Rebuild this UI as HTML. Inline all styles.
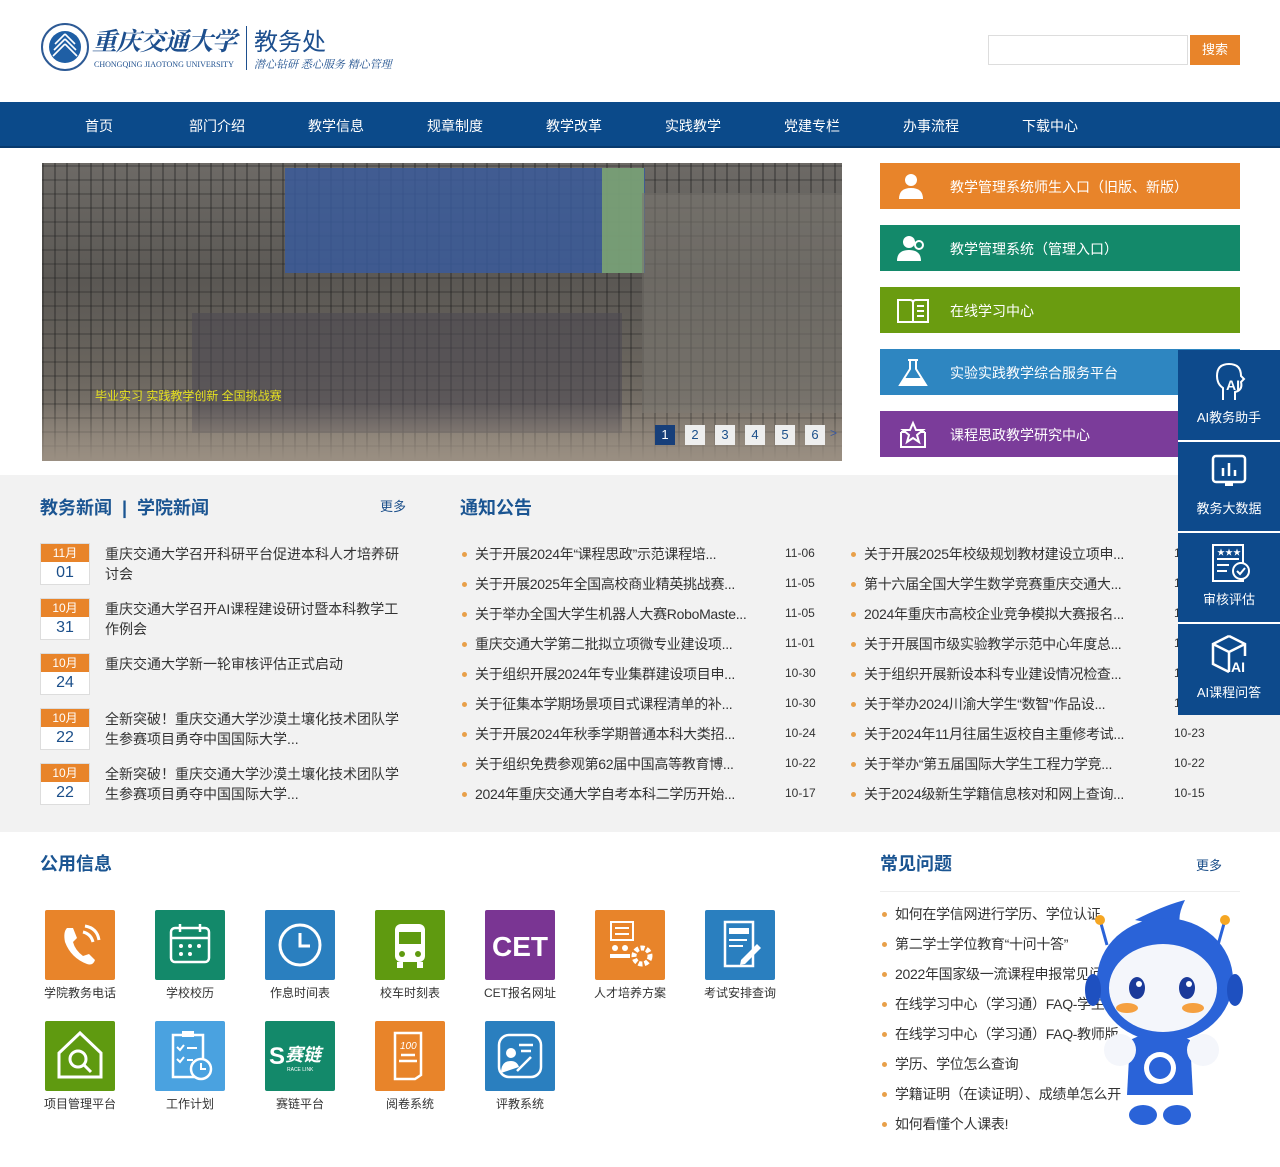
<!DOCTYPE html>
<html><head><meta charset="utf-8">
<style>
*{margin:0;padding:0;box-sizing:border-box}
body{width:1280px;height:1167px;position:relative;background:#fff;font-family:"Liberation Sans","Noto Sans CJK SC",sans-serif;color:#333;overflow:hidden}
.a{position:absolute}
.nav{top:102px;left:0;width:1280px;height:46px;background:#0b4a8a;border-bottom:2px solid #083a6e}
.nav span{position:absolute;top:14px;color:#fff;font-size:14px;transform:translateX(-50%)}
.btn{left:880px;width:360px;height:46px;color:#fff;font-size:14px}
.btn b{position:absolute;left:70px;top:14px;font-weight:normal}
.btn svg{position:absolute;left:16px;top:9px}
.gray{top:475px;left:0;width:1280px;height:357px;background:#f2f2f2}
.h{font-size:18px;font-weight:bold;color:#1b5592}
.date{left:40px;width:50px;height:42px;background:#fff;border:1px solid #ddd}
.date i{display:block;height:18px;background:#e8842a;color:#fff;font-style:normal;font-size:12px;text-align:center;line-height:18px}
.date u{display:block;text-decoration:none;text-align:center;font-size:16px;color:#1b4f8a;line-height:22px}
.nt{left:105px;width:300px;font-size:14px;line-height:20px;color:#333}
.li{font-size:14px;color:#333;white-space:nowrap;letter-spacing:-0.3px}
.li:before{content:"";position:absolute;left:-13px;top:8px;width:5px;height:5px;border-radius:50%;background:#e8a04a}
.dt{font-size:12px;color:#333}
.side{left:1178px;width:102px;height:90px;background:#0d4a8c;color:#fff;font-size:13px;text-align:center;border-bottom:2px solid #fff}
.side span{position:absolute;left:0;right:0;bottom:14px}
.side svg{position:absolute;left:33px;top:10px}
.ic{width:70px;height:70px;border-radius:2px}
.ic svg{position:absolute;left:0;top:0}
.lb{font-size:12px;color:#333;width:90px;text-align:center}
.pg{top:425px;width:20px;height:20px;background:#eee;color:#1b4f8a;font-size:13px;text-align:center;line-height:20px}
</style></head><body>
<!-- header -->
<svg class="a" style="left:40px;top:22px" width="50" height="50"><circle cx="25" cy="25" r="23" fill="#fff" stroke="#2d5a95" stroke-width="2"/><circle cx="25" cy="25" r="16" fill="#1f5fa5"/><path d="M25 12 L15 22 M25 12 L35 22 M25 17 L14 28 M25 17 L36 28 M25 22 L13 34 M25 22 L37 34" stroke="#fff" stroke-width="1.6" fill="none"/></svg>
<div class="a" style="left:92px;top:22px;font-family:'Noto Serif CJK SC',serif;font-size:25px;color:#1d4f8e;font-weight:bold;letter-spacing:-1px;font-style:italic;white-space:nowrap">重庆交通大学</div>
<div class="a" style="left:94px;top:60px;font-family:'Liberation Serif',serif;font-size:8px;color:#1d4f8e">CHONGQING JIAOTONG UNIVERSITY</div>
<div class="a" style="left:246px;top:26px;width:1px;height:44px;background:#1d4f8e"></div>
<div class="a" style="left:254px;top:22px;font-size:24px;color:#1d4f8e">教务处</div>
<div class="a" style="left:254px;top:56px;font-size:11px;color:#1d4f8e;font-style:italic;font-family:'Noto Serif CJK SC',serif">潜心钻研 悉心服务 精心管理</div>
<div class="a" style="left:988px;top:35px;width:200px;height:30px;border:1px solid #ddd"></div>
<div class="a" style="left:1190px;top:35px;width:50px;height:30px;background:#e8842a;color:#fff;font-size:13px;text-align:center;line-height:30px">搜索</div>
<div class="a nav"><span style="left:99px">首页</span><span style="left:217px">部门介绍</span><span style="left:336px">教学信息</span><span style="left:455px">规章制度</span><span style="left:574px">教学改革</span><span style="left:693px">实践教学</span><span style="left:812px">党建专栏</span><span style="left:931px">办事流程</span><span style="left:1050px">下载中心</span></div>
<!-- banner -->
<div class="a" style="left:42px;top:163px;width:800px;height:298px;background:linear-gradient(180deg,#6d6a66 0%,#5b5854 40%,#6a655e 70%,#8a8177 100%);overflow:hidden">
<div class="a" style="left:0;top:0;width:800px;height:298px;background:repeating-linear-gradient(90deg,rgba(30,30,30,.35) 0 2px,transparent 2px 12px),repeating-linear-gradient(0deg,rgba(30,30,30,.25) 0 2px,transparent 2px 14px)"></div>
<div class="a" style="left:243px;top:5px;width:360px;height:105px;background:#3a5a9a;opacity:.85"></div>
<div class="a" style="left:560px;top:5px;width:42px;height:105px;background:#8fb86a;opacity:.7"></div>
<div class="a" style="left:150px;top:150px;width:430px;height:120px;background:#4c4a52;opacity:.6"></div>
<div class="a" style="left:600px;top:30px;width:200px;height:220px;background:#7a7670;opacity:.6"></div>
<div class="a" style="left:0;top:240px;width:800px;height:58px;background:linear-gradient(180deg,transparent,#9a8f82)"></div>
<div class="a" style="left:53px;top:224px;font-size:12px;color:#e5e020">毕业实习 实践教学创新 全国挑战赛</div>
</div>
<div class="a pg" style="left:655px;background:#173f7a;color:#fff">1</div><div class="a pg" style="left:685px">2</div><div class="a pg" style="left:715px">3</div><div class="a pg" style="left:745px">4</div><div class="a pg" style="left:775px">5</div><div class="a pg" style="left:805px">6</div><div class="a" style="left:830px;top:426px;color:#3a5aa0;font-size:12px">&gt;</div>
<!-- right buttons -->
<div class="a btn" style="top:163px;background:#e8842a"><svg width="30" height="28"><circle cx="15" cy="8" r="6" fill="#fff"/><path d="M3 27 Q3 16 15 16 Q27 16 27 27Z" fill="#fff"/></svg><b>教学管理系统师生入口（旧版、新版）</b></div>
<div class="a btn" style="top:225px;background:#13896a"><svg width="34" height="28"><circle cx="13" cy="8" r="6" fill="#fff"/><path d="M1 27 Q1 16 13 16 Q25 16 25 27Z" fill="#fff"/><circle cx="23" cy="11" r="4" fill="none" stroke="#fff" stroke-width="2"/></svg><b>教学管理系统（管理入口）</b></div>
<div class="a btn" style="top:287px;background:#6a9c10"><svg width="34" height="28"><path d="M2 4 H14 Q17 4 17 7 V26 H2Z M32 4 H20 Q17 4 17 7 V26 H32Z" fill="none" stroke="#fff" stroke-width="2"/><path d="M21 10 H28 M21 15 H28 M21 20 H28" stroke="#fff" stroke-width="2"/></svg><b>在线学习中心</b></div>
<div class="a btn" style="top:349px;background:#2e86c1"><svg width="34" height="30"><path d="M12 2 H22 M14 2 V11 L4 27 H30 L20 11 V2" fill="none" stroke="#fff" stroke-width="2"/><path d="M8 20 L26 20 L29 27 H5Z" fill="#fff"/></svg><b>实验实践教学综合服务平台</b></div>
<div class="a btn" style="top:411px;background:#7b3c9a"><svg width="34" height="30"><path d="M5 12 V27 H29 V12 M5 12 H10 M24 12 H29" fill="none" stroke="#fff" stroke-width="2"/><path d="M17 3 L20 10 L27 10 L21 15 L23 22 L17 18 L11 22 L13 15 L7 10 L14 10Z" fill="none" stroke="#fff" stroke-width="2"/></svg><b>课程思政教学研究中心</b></div>
<!-- gray section -->
<div class="a gray"></div>
<div class="a h" style="left:40px;top:494px">教务新闻 &nbsp;| &nbsp;学院新闻</div>
<div class="a" style="left:380px;top:496px;font-size:13px;color:#1b4f8a">更多</div>
<div class="a date" style="top:543px"><i>11月</i><u>01</u></div><div class="a nt" style="top:544px">重庆交通大学召开科研平台促进本科人才培养研讨会</div>
<div class="a date" style="top:598px"><i>10月</i><u>31</u></div><div class="a nt" style="top:599px">重庆交通大学召开AI课程建设研讨暨本科教学工作例会</div>
<div class="a date" style="top:653px"><i>10月</i><u>24</u></div><div class="a nt" style="top:654px">重庆交通大学新一轮审核评估正式启动</div>
<div class="a date" style="top:708px"><i>10月</i><u>22</u></div><div class="a nt" style="top:709px">全新突破！重庆交通大学沙漠土壤化技术团队学生参赛项目勇夺中国国际大学...</div>
<div class="a date" style="top:763px"><i>10月</i><u>22</u></div><div class="a nt" style="top:764px">全新突破！重庆交通大学沙漠土壤化技术团队学生参赛项目勇夺中国国际大学...</div>
<div class="a h" style="left:460px;top:494px">通知公告</div>
<div class="a li" style="left:475px;top:544px">关于开展2024年“课程思政”示范课程培...</div><div class="a dt" style="left:785px;top:546px">11-06</div>
<div class="a li" style="left:475px;top:574px">关于开展2025年全国高校商业精英挑战赛...</div><div class="a dt" style="left:785px;top:576px">11-05</div>
<div class="a li" style="left:475px;top:604px">关于举办全国大学生机器人大赛RoboMaste...</div><div class="a dt" style="left:785px;top:606px">11-05</div>
<div class="a li" style="left:475px;top:634px">重庆交通大学第二批拟立项微专业建设项...</div><div class="a dt" style="left:785px;top:636px">11-01</div>
<div class="a li" style="left:475px;top:664px">关于组织开展2024年专业集群建设项目申...</div><div class="a dt" style="left:785px;top:666px">10-30</div>
<div class="a li" style="left:475px;top:694px">关于征集本学期场景项目式课程清单的补...</div><div class="a dt" style="left:785px;top:696px">10-30</div>
<div class="a li" style="left:475px;top:724px">关于开展2024年秋季学期普通本科大类招...</div><div class="a dt" style="left:785px;top:726px">10-24</div>
<div class="a li" style="left:475px;top:754px">关于组织免费参观第62届中国高等教育博...</div><div class="a dt" style="left:785px;top:756px">10-22</div>
<div class="a li" style="left:475px;top:784px">2024年重庆交通大学自考本科二学历开始...</div><div class="a dt" style="left:785px;top:786px">10-17</div>
<div class="a li" style="left:864px;top:544px">关于开展2025年校级规划教材建设立项申...</div><div class="a dt" style="left:1174px;top:546px">11-05</div>
<div class="a li" style="left:864px;top:574px">第十六届全国大学生数学竞赛重庆交通大...</div><div class="a dt" style="left:1174px;top:576px">11-04</div>
<div class="a li" style="left:864px;top:604px">2024年重庆市高校企业竞争模拟大赛报名...</div><div class="a dt" style="left:1174px;top:606px">11-01</div>
<div class="a li" style="left:864px;top:634px">关于开展国市级实验教学示范中心年度总...</div><div class="a dt" style="left:1174px;top:636px">10-31</div>
<div class="a li" style="left:864px;top:664px">关于组织开展新设本科专业建设情况检查...</div><div class="a dt" style="left:1174px;top:666px">10-28</div>
<div class="a li" style="left:864px;top:694px">关于举办2024川渝大学生“数智”作品设...</div><div class="a dt" style="left:1174px;top:696px">10-25</div>
<div class="a li" style="left:864px;top:724px">关于2024年11月往届生返校自主重修考试...</div><div class="a dt" style="left:1174px;top:726px">10-23</div>
<div class="a li" style="left:864px;top:754px">关于举办“第五届国际大学生工程力学竞...</div><div class="a dt" style="left:1174px;top:756px">10-22</div>
<div class="a li" style="left:864px;top:784px">关于2024级新生学籍信息核对和网上查询...</div><div class="a dt" style="left:1174px;top:786px">10-15</div>
<!-- side panel -->
<div class="a side" style="top:350px;height:92px"><svg width="36" height="44"><path d="M24 40 V32 Q32 30 30 22 L33 19 L30 16 Q30 4 18 4 Q6 4 6 16 Q6 24 12 28 V40" fill="none" stroke="#fff" stroke-width="2"/><text x="15" y="30" fill="#fff" font-size="14" font-weight="bold" font-family="Liberation Sans">AI</text></svg><span>AI教务助手</span></div>
<div class="a side" style="top:442px;height:91px"><svg width="36" height="40"><rect x="2" y="4" width="32" height="26" rx="3" fill="none" stroke="#fff" stroke-width="2.5"/><path d="M12 24 V16 M18 24 V11 M24 24 V18" stroke="#fff" stroke-width="2.5"/><rect x="14" y="30" width="8" height="4" fill="#fff"/></svg><span>教务大数据</span></div>
<div class="a side" style="top:533px;height:91px"><svg width="40" height="40"><rect x="2" y="2" width="30" height="36" fill="none" stroke="#fff" stroke-width="2"/><path d="M6 16 H28 M6 22 H18 M6 28 H16" stroke="#fff" stroke-width="2"/><text x="6" y="12" fill="#fff" font-size="8">★★★</text><circle cx="30" cy="28" r="8" fill="#0d4a8c" stroke="#fff" stroke-width="2"/><path d="M26 28 L29 31 L34 25" stroke="#fff" stroke-width="2" fill="none"/></svg><span>审核评估</span></div>
<div class="a side" style="top:624px;height:91px;border-bottom:none"><svg width="40" height="42"><path d="M18 2 L34 10 V22 M18 2 L2 10 V30 L18 38 M2 10 L18 18 L34 10 M18 18 V38" fill="none" stroke="#fff" stroke-width="2.5"/><text x="20" y="38" fill="#fff" font-size="14" font-weight="bold" font-family="Liberation Sans">AI</text></svg><span>AI课程问答</span></div>
<!-- public info -->
<div class="a h" style="left:40px;top:850px">公用信息</div>
<div class="a ic" style="left:45px;top:910px;background:#e8842a"><svg width="70" height="70"><path d="M22 18 Q18 22 20 32 Q26 48 42 54 Q48 56 50 50 L44 44 L38 46 Q30 40 28 32 L32 28 L28 18Z" fill="#fff"/><path d="M38 22 Q46 24 48 32 M40 16 Q52 18 54 30" stroke="#fff" stroke-width="3" fill="none"/></svg></div>
<div class="a ic" style="left:155px;top:910px;background:#13896a"><svg width="70" height="70"><rect x="16" y="18" width="38" height="34" rx="4" fill="none" stroke="#fff" stroke-width="2.5"/><path d="M16 28 H54 M25 14 V22 M45 14 V22" stroke="#fff" stroke-width="2.5"/><g fill="#fff"><circle cx="26" cy="36" r="2"/><circle cx="35" cy="36" r="2"/><circle cx="44" cy="36" r="2"/><circle cx="26" cy="44" r="2"/><circle cx="35" cy="44" r="2"/></g></svg></div>
<div class="a ic" style="left:265px;top:910px;background:#2a7fbf"><svg width="70" height="70"><circle cx="35" cy="35" r="20" fill="none" stroke="#fff" stroke-width="3"/><path d="M35 23 V36 H45" stroke="#fff" stroke-width="3" fill="none"/></svg></div>
<div class="a ic" style="left:375px;top:910px;background:#5f9a10"><svg width="70" height="70"><rect x="20" y="14" width="30" height="38" rx="6" fill="#fff"/><rect x="24" y="22" width="22" height="12" fill="#5f9a10"/><circle cx="27" cy="44" r="3" fill="#5f9a10"/><circle cx="43" cy="44" r="3" fill="#5f9a10"/><rect x="22" y="52" width="6" height="6" fill="#fff"/><rect x="42" y="52" width="6" height="6" fill="#fff"/></svg></div>
<div class="a ic" style="left:485px;top:910px;background:#7a3593"><svg width="70" height="70"><text x="35" y="46" text-anchor="middle" fill="#fff" font-size="28" font-weight="bold" font-family="Liberation Sans">CET</text></svg></div>
<div class="a ic" style="left:595px;top:910px;background:#e8842a"><svg width="70" height="70"><rect x="16" y="12" width="22" height="18" fill="none" stroke="#fff" stroke-width="2"/><path d="M20 18 H34 M20 24 H34" stroke="#fff" stroke-width="2"/><circle cx="20" cy="38" r="3" fill="#fff"/><circle cx="30" cy="38" r="3" fill="#fff"/><path d="M15 46 H35" stroke="#fff" stroke-width="4"/><circle cx="47" cy="46" r="8" fill="none" stroke="#fff" stroke-width="5" stroke-dasharray="4 2"/></svg></div>
<div class="a ic" style="left:705px;top:910px;background:#2a7fbf"><svg width="70" height="70"><rect x="20" y="12" width="28" height="44" fill="none" stroke="#fff" stroke-width="2.5"/><rect x="24" y="18" width="20" height="6" fill="#fff"/><path d="M24 30 H42 M24 36 H38" stroke="#fff" stroke-width="2"/><path d="M36 50 L52 34 L56 38 L40 54 L35 55Z" fill="#fff"/></svg></div>
<div class="a lb" style="left:35px;top:984px">学院教务电话</div><div class="a lb" style="left:145px;top:984px">学校校历</div><div class="a lb" style="left:255px;top:984px">作息时间表</div><div class="a lb" style="left:365px;top:984px">校车时刻表</div><div class="a lb" style="left:475px;top:984px">CET报名网址</div><div class="a lb" style="left:585px;top:984px">人才培养方案</div><div class="a lb" style="left:695px;top:984px">考试安排查询</div>
<div class="a ic" style="left:45px;top:1021px;background:#5f9a10"><svg width="70" height="70"><path d="M35 12 L14 32 V56 H56 V32Z" fill="none" stroke="#fff" stroke-width="3"/><circle cx="33" cy="38" r="8" fill="none" stroke="#fff" stroke-width="3"/><path d="M39 44 L46 51" stroke="#fff" stroke-width="3"/></svg></div>
<div class="a ic" style="left:155px;top:1021px;background:#4aa2e0"><svg width="70" height="70"><rect x="18" y="14" width="30" height="42" fill="none" stroke="#fff" stroke-width="2.5"/><rect x="27" y="10" width="12" height="6" fill="#fff"/><path d="M22 26 L25 29 L29 24 M32 27 H42 M22 38 L25 41 L29 36 M32 39 H38" stroke="#fff" stroke-width="2" fill="none"/><circle cx="46" cy="48" r="10" fill="#4aa2e0" stroke="#fff" stroke-width="2.5"/><path d="M46 42 V48 H51" stroke="#fff" stroke-width="2" fill="none"/></svg></div>
<div class="a ic" style="left:265px;top:1021px;background:#13896a"><svg width="70" height="70"><text x="4" y="43" fill="#fff" font-size="24" font-weight="bold" font-family="Liberation Sans">S</text><text x="20" y="40" fill="#fff" font-size="18" font-weight="bold" font-style="italic" font-family="Noto Sans CJK SC">赛链</text><text x="22" y="50" fill="#fff" font-size="5">RACE LINK</text></svg></div>
<div class="a ic" style="left:375px;top:1021px;background:#e8842a"><svg width="70" height="70"><path d="M20 12 H46 V54 L40 58 H20Z" fill="none" stroke="#fff" stroke-width="2.5"/><text x="25" y="28" fill="#fff" font-size="10" font-style="italic" font-family="Liberation Sans">100</text><path d="M26 34 H40 M24 40 H42" stroke="#fff" stroke-width="2.5"/></svg></div>
<div class="a ic" style="left:485px;top:1021px;background:#2a7fbf"><svg width="70" height="70"><rect x="14" y="14" width="42" height="42" rx="10" fill="none" stroke="#fff" stroke-width="2.5"/><circle cx="26" cy="32" r="5" fill="#fff"/><path d="M16 52 Q16 40 26 40 Q32 40 34 46Z" fill="#fff"/><path d="M34 24 H48 M36 30 H46 M32 50 L46 36" stroke="#fff" stroke-width="2.5"/></svg></div>
<div class="a lb" style="left:35px;top:1095px">项目管理平台</div><div class="a lb" style="left:145px;top:1095px">工作计划</div><div class="a lb" style="left:255px;top:1095px">赛链平台</div><div class="a lb" style="left:365px;top:1095px">阅卷系统</div><div class="a lb" style="left:475px;top:1095px">评教系统</div>
<!-- FAQ -->
<div class="a h" style="left:880px;top:850px">常见问题</div>
<div class="a" style="left:1196px;top:855px;font-size:13px;color:#1b4f8a">更多</div>
<div class="a" style="left:880px;top:891px;width:360px;height:1px;background:#eee"></div>
<div class="a li" style="left:895px;top:904px">如何在学信网进行学历、学位认证</div>
<div class="a li" style="left:895px;top:934px">第二学士学位教育“十问十答”</div>
<div class="a li" style="left:895px;top:964px">2022年国家级一流课程申报常见问题</div>
<div class="a li" style="left:895px;top:994px">在线学习中心（学习通）FAQ-学生</div>
<div class="a li" style="left:895px;top:1024px">在线学习中心（学习通）FAQ-教师版</div>
<div class="a li" style="left:895px;top:1054px">学历、学位怎么查询</div>
<div class="a li" style="left:895px;top:1084px">学籍证明（在读证明）、成绩单怎么开</div>
<div class="a li" style="left:895px;top:1114px">如何看懂个人课表!</div>
<!-- mascot -->
<svg class="a" style="left:1075px;top:900px" width="175" height="230">
<path d="M60 20 Q90 5 110 0 Q100 20 108 30 Z" fill="#2a63d8"/>
<path d="M32 45 L25 20 M143 45 L150 20" stroke="#2a63d8" stroke-width="3"/>
<circle cx="25" cy="20" r="5" fill="#f5a623"/><circle cx="150" cy="20" r="5" fill="#f5a623"/>
<ellipse cx="90" cy="80" rx="68" ry="62" fill="#2a63d8"/>
<ellipse cx="88" cy="88" rx="54" ry="44" fill="#f4f6fb"/>
<ellipse cx="18" cy="90" rx="8" ry="16" fill="#1e50c0"/><ellipse cx="160" cy="90" rx="8" ry="16" fill="#1e50c0"/>
<ellipse cx="62" cy="88" rx="8" ry="11" fill="#1b3a9a"/><ellipse cx="112" cy="88" rx="8" ry="11" fill="#1b3a9a"/>
<circle cx="64" cy="84" r="3" fill="#fff"/><circle cx="114" cy="84" r="3" fill="#fff"/>
<ellipse cx="52" cy="108" rx="11" ry="5" fill="#f5a040"/><ellipse cx="118" cy="108" rx="11" ry="5" fill="#f5a040"/>
<path d="M55 140 Q85 125 115 140 L118 195 H52 Z" fill="#2a63d8"/>
<circle cx="85" cy="168" r="16" fill="#fff"/><circle cx="85" cy="168" r="11" fill="#2a63d8"/>
<circle cx="45" cy="150" r="16" fill="#f4f6fb"/><circle cx="128" cy="150" r="16" fill="#f4f6fb"/>
<ellipse cx="68" cy="215" rx="14" ry="10" fill="#2a63d8"/><ellipse cx="102" cy="215" rx="14" ry="10" fill="#2a63d8"/>
</svg>
</body></html>
